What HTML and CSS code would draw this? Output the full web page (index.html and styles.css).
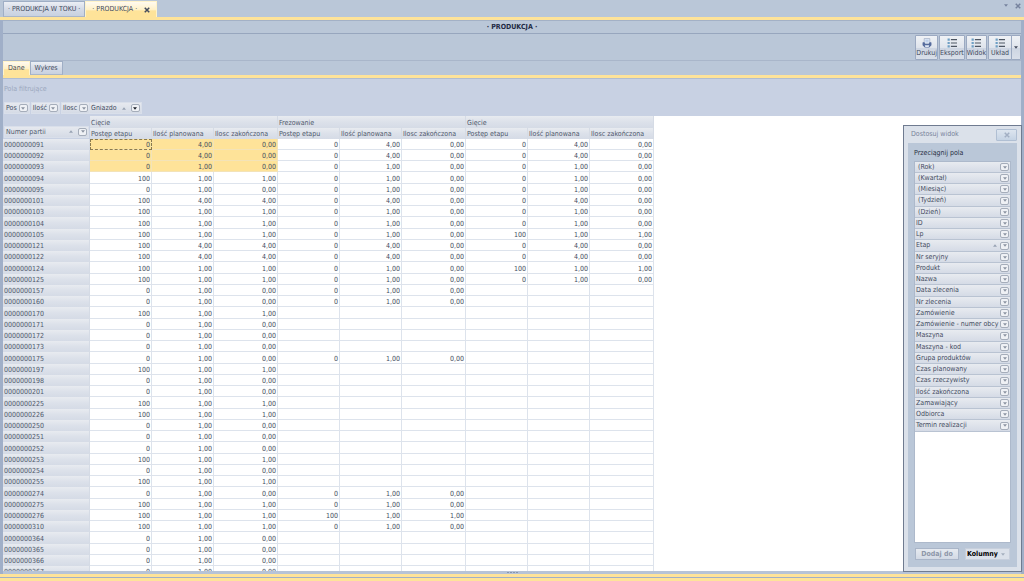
FILE: index.html
```html
<!DOCTYPE html>
<html lang="pl">
<head>
  <meta charset="UTF-8">
  <meta name="viewport" content="width=device-width, initial-scale=1.0">
  <title>Produkcja</title>
  <link rel="stylesheet" href="styles.css">
</head>
<body>
  <svg class="symbols" aria-hidden="true">
    <symbol id="arrow" viewBox="0 0 6 4"><path d="M0 0h6L3 4z"/></symbol>
    <symbol id="arrow-up" viewBox="0 0 6 4"><path d="M0 4h6L3 0z"/></symbol>
    <symbol id="cross" viewBox="0 0 8 8"><path d="M1 1l6 6M7 1L1 7" fill="none" stroke="currentColor" stroke-width="2"/></symbol>
    <symbol id="list" viewBox="0 0 18 18">
      <path d="M1 1h4v4H1zM1 7h4v4H1zM1 13h4v4H1z" fill="#6f9fc4"/>
      <path d="M7 3h11M7 9h11M7 15h11" stroke="#4d5663" stroke-width="2"/>
    </symbol>
    <symbol id="printer" viewBox="0 0 18 18">
      <path d="M4 1h10v9H4z" fill="#e6eefa" stroke="#8c9ab5"/>
      <path d="M1 8l3-1 2 4h6l2-4 3 1v5l-4 4H5l-4-4z" fill="#556b9d"/>
      <path d="M5 13h8l-1 3H6z" fill="#dfe8f5"/>
      <path d="M6 4h6M6 7h6" stroke="#7b9bce"/>
    </symbol>
  </svg>

  <nav class="tabs window-tabs">
    <button class="tab">· PRODUKCJA W TOKU ·</button>
    <button class="tab active">· PRODUKCJA · <svg class="cross"><use href="#cross"/></svg></button>
    <span class="window-tools">
      <button aria-label="Lista okien"><svg class="arrow"><use href="#arrow"/></svg></button>
      <button aria-label="Zamknij"><svg class="cross"><use href="#cross"/></svg></button>
    </span>
  </nav>

  <div class="window">
    <h1 class="title">· PRODUKCJA ·</h1>

    <div class="toolbar">
      <button class="tool"><svg><use href="#printer"/></svg>Drukuj</button>
      <button class="tool"><svg><use href="#list"/></svg>Eksport</button>
      <button class="tool"><svg><use href="#list"/></svg>Widok</button>
      <div class="split">
        <button class="tool"><svg><use href="#list"/></svg>Układ</button>
        <button class="tool more" aria-label="Więcej"><svg class="arrow"><use href="#arrow"/></svg></button>
      </div>
    </div>

    <nav class="tabs view-tabs">
      <button class="tab active">Dane</button>
      <button class="tab">Wykres</button>
    </nav>

    <main class="pivot">
      <div class="pivot-top">
        <p class="filter-hint">Pola filtrujące</p>
        <div class="fields">
          <div class="data-fields">
            <span class="field">Pos <button class="drop" aria-label="Filtr Pos"><svg class="arrow"><use href="#arrow"/></svg></button></span>
            <span class="field">Ilość <button class="drop" aria-label="Filtr Ilość"><svg class="arrow"><use href="#arrow"/></svg></button></span>
            <span class="field">Ilosc <button class="drop" aria-label="Filtr Ilosc"><svg class="arrow"><use href="#arrow"/></svg></button></span>
          </div>
          <span class="field">Gniazdo <svg class="arrow sort"><use href="#arrow-up"/></svg><button class="drop on" aria-label="Filtr Gniazdo"><svg class="arrow"><use href="#arrow"/></svg></button></span>
        </div>
      </div>

      <div class="grid">
        <table>
          <colgroup>
            <col class="c-head">
            <col class="c-num"><col class="c-num"><col class="c-done">
            <col class="c-num"><col class="c-num"><col class="c-done">
            <col class="c-num"><col class="c-num"><col class="c-done">
          </colgroup>
          <thead>
            <tr>
              <th class="corner" rowspan="2"><span class="field">Numer partii <svg class="arrow sort"><use href="#arrow-up"/></svg><button class="drop" aria-label="Filtr Numer partii"><svg class="arrow"><use href="#arrow"/></svg></button></span></th>
              <th colspan="3">Cięcie</th>
              <th colspan="3">Frezowanie</th>
              <th colspan="3">Gięcie</th>
            </tr>
            <tr>
              <th>Postęp etapu</th><th>Ilość planowana</th><th>Ilosc zakończona</th>
              <th>Postęp etapu</th><th>Ilość planowana</th><th>Ilosc zakończona</th>
              <th>Postęp etapu</th><th>Ilość planowana</th><th>Ilosc zakończona</th>
            </tr>
          </thead>
          <tbody id="rows"></tbody>
        </table>
      </div>
    </main>
    <div class="splitter"><i></i><i></i><i></i><i></i></div>
  </div>
  <div class="bottom-edge"></div>

  <aside class="panel">
    <header class="panel-head">
      <h2>Dostosuj widok</h2>
      <button class="panel-close" aria-label="Zamknij"><svg class="cross"><use href="#cross"/></svg></button>
    </header>
    <div class="panel-body">
      <h3>Przeciągnij pola</h3>
      <ul class="field-list" id="fields"></ul>
      <div class="panel-actions">
        <button class="add" disabled>Dodaj do</button>
        <div class="area">
          <select aria-label="Obszar"><option>Kolumny</option><option>Wiersze</option></select>
          <svg class="arrow"><use href="#arrow"/></svg>
        </div>
      </div>
    </div>
  </aside>

  <script src="script.js"></script>
</body>
</html>
```
FILE: styles.css
```css
* {
  box-sizing: border-box;
}
body {
  margin: 0;
  height: 100vh;
  display: flex;
  flex-direction: column;
  position: relative;
  overflow: hidden;
  background: #bac7d8;
  color: #434b5e;
  font-family: "DejaVu Sans Condensed", Tahoma, sans-serif;
  font-size: 7px;
  line-height: 11px;
}
button, select {
  font: inherit;
  color: inherit;
  margin: 0;
  padding: 0;
  border: 0;
  background: none;
}
h1, h2, h3, p, ul {
  margin: 0;
  padding: 0;
  font-size: 7px;
}
svg {
  display: block;
  fill: currentColor;
}
.symbols {
  display: none;
}
.arrow {
  width: 4px;
  height: 3px;
}
.cross {
  width: 6px;
  height: 6px;
}

/* tabs */
.tabs {
  display: flex;
  flex: none;
  align-items: flex-end;
  border-bottom: 3px solid #fee399;
}
.window-tabs {
  height: 20px;
  padding-left: 3px;
  box-shadow: 0 1px #a3b1c6;
}
.tab {
  display: flex;
  align-items: center;
  height: 16px;
  padding: 0 4px;
  border: 1px solid #9faec5;
  border-bottom-color: #a9b6ca;
  background: linear-gradient(#eceff5, #d5dbe7 50%, #c8d1e0);
}
.tab.active {
  border-color: #fff3c9;
  border-bottom: 0;
  background: linear-gradient(#fffaf0, #fff1c8 50%, #fee399 60%);
}
.window-tabs .active {
  padding: 0 6px;
}
.tab .cross {
  margin-left: 7px;
}
.window-tools {
  display: flex;
  align-self: flex-start;
  align-items: center;
  gap: 7px;
  height: 11px;
  margin-left: auto;
  padding-right: 3px;
  color: #76839e;
}

.window {
  flex: 1;
  min-height: 0;
  display: flex;
  flex-direction: column;
  border: solid #a0afc8;
  border-width: 0 3px 0 3px;
}
.title {
  height: 14px;
  padding-top: 2px;
  border-bottom: 1px solid #97a6be;
  color: #1f2b45;
  text-align: center;
}
.toolbar {
  display: flex;
  justify-content: flex-end;
  gap: 1px;
  height: 27px;
  padding-top: 1px;
  border-bottom: 1px solid #a9b6ca;
}
.tool {
  display: flex;
  flex-direction: column;
  align-items: center;
  justify-content: space-between;
  height: 25px;
  padding: 2px 0 0;
  border: 1px solid #9ba9c1;
  border-radius: 1px;
  background: linear-gradient(#eff2f6, #dfe4ec 50%, #cdd5e2 52%, #d9dfe9);
}
.tool svg {
  width: 10px;
  height: 10px;
}
.split {
  display: flex;
}
.split .tool {
  padding: 2px 2px 0;
}
.split .more {
  justify-content: center;
  margin-left: -1px;
  padding: 0 2px;
}
.tool .arrow {
  width: 4px;
  height: 3px;
}
.view-tabs {
  height: 17px;
}
.view-tabs .tab {
  height: 14px;
}

/* pivot grid */
.pivot {
  flex: 1;
  min-height: 0;
  display: flex;
  flex-direction: column;
  border-top: 1px solid #b0bdd1;
  background: #fff;
}
.pivot-top {
  padding: 5px 1px 2px;
  background: #c8d1e3;
}
.filter-hint {
  color: #9ba7bd;
}
.fields {
  display: flex;
  margin-top: 7px;
}
.data-fields {
  display: flex;
  gap: 1px;
  width: 85px;
}
.field {
  display: flex;
  align-items: center;
  height: 12px;
  gap: 2px;
  padding: 0 1px;
  border: 1px solid #d9dfea;
  background: linear-gradient(#e6e9ef, #d5dbe6);
}
.drop {
  display: flex;
  flex: none;
  align-items: center;
  justify-content: center;
  width: 9px;
  height: 8px;
  border: 1px solid #a5adba;
  border-radius: 2px;
  background: #eff1f5;
  color: #8b93a1;
}
.drop.on {
  color: #1b1f29;
}
.sort {
  margin: 0 3px;
  color: #98a2b3;
}
.grid {
  flex: 1;
  min-height: 0;
  overflow: hidden;
}
table {
  width: 651px;
  table-layout: fixed;
  border-collapse: separate;
  border-spacing: 0;
}
.c-head {
  width: 87px;
}
.c-num {
  width: 62px;
}
.c-done {
  width: 64px;
}
th, td {
  height: 11px;
  padding: 0 1px;
  line-height: 10px;
  white-space: nowrap;
}
th {
  border-right: 1px solid #d5dbe5;
  background: linear-gradient(#e8ebf0, #dce1ea 50%, #d5dbe6);
  color: #4f586b;
  font-weight: normal;
  text-align: left;
}
thead th {
  height: 12px;
  padding-top: 1px;
}
thead tr + tr th {
  height: 11px;
}
tbody th {
  padding-top: 1px;
}
td {
  padding-top: 1px;
  border-right: 1px solid #dde3ec;
  box-shadow: inset 0 -1px #dde3ec;
  text-align: right;
}
tbody tr:nth-child(4n) > *, .field-list li:nth-child(4n) {
  height: 12px;
}
.corner {
  padding: 8px 1px 0;
  border: 0;
  background: #c8d1e3;
}
.corner .sort {
  margin-left: auto;
}
td.selected {
  border-color: #f3e3b8;
  box-shadow: inset 0 -1px #f3e3b8;
  background: #fee399;
}
td.focused {
  outline: 1px dashed #8a7a4e;
  outline-offset: -1px;
}
.splitter {
  display: flex;
  align-items: center;
  justify-content: center;
  gap: 1px;
  height: 3px;
  background: #b6c3d7;
}
.splitter i {
  width: 2px;
  height: 1px;
  background: #8795ad;
}
.bottom-edge {
  flex: none;
  height: 7px;
  border-top: 3px solid #fee399;
  border-bottom: 3px solid #fee399;
  background: #a0afc8;
}

/* floating field chooser */
.panel {
  position: absolute;
  top: 125px;
  right: 2px;
  bottom: 9px;
  width: 119px;
  display: flex;
  flex-direction: column;
  padding: 0 4px 4px;
  border: 1px solid #6f7b90;
  background: #dbe1ea;
}
.panel-head {
  display: flex;
  align-items: center;
  justify-content: space-between;
  height: 17px;
  padding-left: 3px;
}
.panel-head h2 {
  color: #78839a;
  font-weight: normal;
}
.panel-close {
  display: flex;
  align-items: center;
  justify-content: center;
  width: 21px;
  height: 12px;
  border: 1px solid #b0bfd3;
  border-radius: 1px;
  background: linear-gradient(#dde5ef, #c5d3e4);
  color: #a2afc4;
}
.panel-body {
  flex: 1;
  min-height: 0;
  display: flex;
  flex-direction: column;
  padding: 5px 6px 7px;
  background: #bac7d8;
}
.panel-body h3 {
  margin-bottom: 2px;
  color: #252d3f;
  font-weight: normal;
}
.field-list {
  flex: 1;
  min-height: 0;
  overflow: hidden;
  border: 1px solid #adb9cb;
  background: #fff;
  list-style: none;
}
.field-list li {
  display: flex;
  align-items: center;
  height: 11px;
  padding: 0 1px;
  border-bottom: 1px solid #b9c3d2;
  background: linear-gradient(#e8ebf0, #d5dbe6);
  white-space: nowrap;
}
.field-list .drop {
  margin-left: auto;
}
.field-list .sort + .drop {
  margin-left: 0;
}
.field-list .sort {
  margin-left: auto;
}
.field-list .group {
  padding-left: 3px;
}
.panel-actions {
  display: flex;
  justify-content: space-between;
  margin-top: 5px;
  padding: 0 1px;
  font-weight: bold;
}
.add {
  width: 44px;
  height: 12px;
  border: 1px solid #a9b5c8;
  background: linear-gradient(#e6eaf0, #d3dae5);
  color: #8d97a9;
}
.area {
  display: flex;
  align-items: center;
  width: 45px;
  height: 12px;
  padding: 0 4px 0 1px;
  border: 1px solid #c7cfdc;
  background: #dbe1ea;
  color: #a5afbe;
}
.area select {
  flex: 1;
  min-width: 0;
  appearance: none;
  color: #000;
}
```
FILE: script.js
```js
// batch number, then [progress, planned, done] for each station
const rows = [
  ["091", [0, 4, 0], [0, 4, 0], [0, 4, 0]],
  ["092", [0, 4, 0], [0, 4, 0], [0, 4, 0]],
  ["093", [0, 1, 0], [0, 1, 0], [0, 1, 0]],
  ["094", [100, 1, 1], [0, 1, 0], [0, 1, 0]],
  ["095", [0, 1, 0], [0, 1, 0], [0, 1, 0]],
  ["101", [100, 4, 4], [0, 4, 0], [0, 4, 0]],
  ["103", [100, 1, 1], [0, 1, 0], [0, 1, 0]],
  ["104", [100, 1, 1], [0, 1, 0], [0, 1, 0]],
  ["105", [100, 1, 1], [0, 1, 0], [100, 1, 1]],
  ["121", [100, 4, 4], [0, 4, 0], [0, 4, 0]],
  ["122", [100, 4, 4], [0, 4, 0], [0, 4, 0]],
  ["124", [100, 1, 1], [0, 1, 0], [100, 1, 1]],
  ["125", [100, 1, 1], [0, 1, 0], [0, 1, 0]],
  ["157", [0, 1, 0], [0, 1, 0]],
  ["160", [0, 1, 0], [0, 1, 0]],
  ["170", [100, 1, 1]],
  ["171", [0, 1, 0]],
  ["172", [0, 1, 0]],
  ["173", [0, 1, 0]],
  ["175", [0, 1, 0], [0, 1, 0]],
  ["197", [100, 1, 1]],
  ["198", [0, 1, 0]],
  ["201", [0, 1, 0]],
  ["225", [100, 1, 1]],
  ["226", [100, 1, 1]],
  ["250", [0, 1, 0]],
  ["251", [0, 1, 0]],
  ["252", [0, 1, 0]],
  ["253", [100, 1, 1]],
  ["254", [0, 1, 0]],
  ["255", [100, 1, 1]],
  ["274", [0, 1, 0], [0, 1, 0]],
  ["275", [100, 1, 1], [0, 1, 0]],
  ["276", [100, 1, 1], [100, 1, 1]],
  ["310", [100, 1, 1], [0, 1, 0]],
  ["364", [0, 1, 0]],
  ["365", [0, 1, 0]],
  ["366", [0, 1, 0]],
  ["367", [0, 1, 0]]
];

const fields = ["(Rok)", "(Kwartał)", "(Miesiąc)", "(Tydzień)", "(Dzień)", "ID", "Lp", "Etap",
  "Nr seryjny", "Produkt", "Nazwa", "Data zlecenia", "Nr zlecenia", "Zamówienie",
  "Zamówienie - numer obcy", "Maszyna", "Maszyna - kod", "Grupa produktów", "Czas planowany",
  "Czas rzeczywisty", "Ilość zakończona", "Zamawiający", "Odbiorca", "Termin realizacji"];

let html = "";
rows.forEach(function(row, r) {
  html += `<tr><th>${row[0].padStart(10, "0")}</th>`;
  for (let g = 1; g <= 3; g++) {
    for (let i = 0; i < 3; i++) {
      let text = "";
      if (row[g]) {
        text = i === 0 ? row[g][i] : row[g][i].toFixed(2).replace(".", ",");
      }
      let cls = r < 3 && g === 1 ? "selected" : "";
      if (r === 0 && g === 1 && i === 0) cls += " focused";
      html += cls ? `<td class="${cls}">${text}</td>` : `<td>${text}</td>`;
    }
  }
  html += "</tr>";
});
document.getElementById("rows").innerHTML = html;

document.getElementById("fields").innerHTML = fields.map(function(name) {
  const cls = name[0] === "(" ? ' class="group"' : "";
  const sort = name === "Etap" ? '<svg class="arrow sort"><use href="#arrow-up"/></svg>' : "";
  return `<li${cls}>${name}${sort}<button class="drop" aria-label="Filtr ${name}"><svg class="arrow"><use href="#arrow"/></svg></button></li>`;
}).join("");
```
